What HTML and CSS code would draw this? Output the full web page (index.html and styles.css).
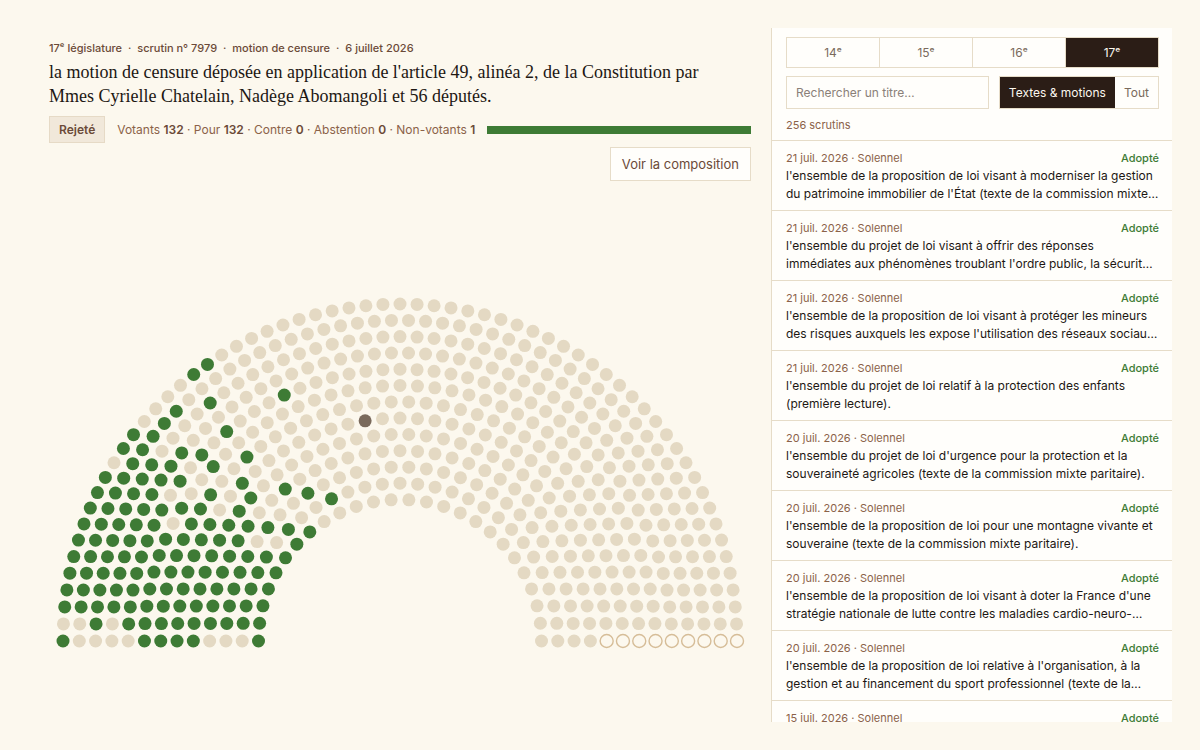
FILE: index.html
```html
<!DOCTYPE html>
<html lang="fr">
<head>
<meta charset="utf-8">
<meta name="viewport" content="width=device-width, initial-scale=1">
<title>Scrutin n° 7979</title>
<link rel="stylesheet" href="styles.css">
</head>
<body>
<div class="app">
  <main class="vote">
    <p class="vote-meta">17ᵉ législature <span class="dot">·</span> scrutin n° 7979 <span class="dot">·</span> motion de censure <span class="dot">·</span> 6 juillet 2026</p>
    <h1 class="vote-title">la motion de censure déposée en application de l'article 49, alinéa 2, de la Constitution par<br>Mmes Cyrielle Chatelain, Nadège Abomangoli et 56 députés.</h1>
    <div class="result">
      <span class="badge">Rejeté</span>
      <p class="counts">Votants <b>132</b> · Pour <b>132</b> · Contre <b>0</b> · Abstention <b>0</b> · Non-votants <b>1</b></p>
      <div class="bar"><div class="bar-for" style="width:100%"></div></div>
    </div>
    <button class="compo" type="button">Voir la composition</button>
    <svg class="hemicycle" id="hemicycle" viewBox="0 0 702 365" role="img" aria-label="Hémicycle"></svg>
  </main>
  <aside class="panel">
    <div class="filters">
      <div class="tabs">
        <button class="tab" type="button">14ᵉ</button>
        <button class="tab" type="button">15ᵉ</button>
        <button class="tab" type="button">16ᵉ</button>
        <button class="tab active" type="button">17ᵉ</button>
      </div>
      <div class="search-row">
        <input class="search" type="text" placeholder="Rechercher un titre…" aria-label="Rechercher un titre">
        <div class="toggle">
          <button class="option active" type="button">Textes &amp; motions</button>
          <button class="option" type="button">Tout</button>
        </div>
      </div>
      <p class="total">256 scrutins</p>
    </div>
    <ul class="list">
      <li class="item"><div class="item-head"><span>21 juil. 2026 · Solennel</span><span class="adopted">Adopté</span></div><p class="item-title">l'ensemble de la proposition de loi visant à moderniser la gestion<br>du patrimoine immobilier de l'État (texte de la commission mixte…</p></li>
      <li class="item"><div class="item-head"><span>21 juil. 2026 · Solennel</span><span class="adopted">Adopté</span></div><p class="item-title">l'ensemble du projet de loi visant à offrir des réponses<br>immédiates aux phénomènes troublant l'ordre public, la sécurit…</p></li>
      <li class="item"><div class="item-head"><span>21 juil. 2026 · Solennel</span><span class="adopted">Adopté</span></div><p class="item-title">l'ensemble de la proposition de loi visant à protéger les mineurs<br>des risques auxquels les expose l'utilisation des réseaux sociau…</p></li>
      <li class="item"><div class="item-head"><span>21 juil. 2026 · Solennel</span><span class="adopted">Adopté</span></div><p class="item-title">l'ensemble du projet de loi relatif à la protection des enfants<br>(première lecture).</p></li>
      <li class="item"><div class="item-head"><span>20 juil. 2026 · Solennel</span><span class="adopted">Adopté</span></div><p class="item-title">l'ensemble du projet de loi d'urgence pour la protection et la<br>souveraineté agricoles (texte de la commission mixte paritaire).</p></li>
      <li class="item"><div class="item-head"><span>20 juil. 2026 · Solennel</span><span class="adopted">Adopté</span></div><p class="item-title">l'ensemble de la proposition de loi pour une montagne vivante et<br>souveraine (texte de la commission mixte paritaire).</p></li>
      <li class="item"><div class="item-head"><span>20 juil. 2026 · Solennel</span><span class="adopted">Adopté</span></div><p class="item-title">l'ensemble de la proposition de loi visant à doter la France d'une<br>stratégie nationale de lutte contre les maladies cardio-neuro-…</p></li>
      <li class="item"><div class="item-head"><span>20 juil. 2026 · Solennel</span><span class="adopted">Adopté</span></div><p class="item-title">l'ensemble de la proposition de loi relative à l'organisation, à la<br>gestion et au financement du sport professionnel (texte de la…</p></li>
      <li class="item"><div class="item-head"><span>15 juil. 2026 · Solennel</span><span class="adopted">Adopté</span></div></li>
    </ul>
  </aside>
</div>
<script src="hemicycle.js"></script>
</body>
</html>
```
FILE: styles.css
```css
* { box-sizing: border-box; }
html, body { height: 100%; }
body {
  margin: 0;
  background: #fcf8ee;
  color: #1d1713;
  font-family: Inter, "Liberation Sans", sans-serif;
}
p, h1, ul { margin: 0; padding: 0; }
button, input { font-family: inherit; border-radius: 0; margin: 0; }
button { cursor: pointer; }
.app {
  height: 100vh;
  padding: 28px;
  display: grid;
  grid-template-columns: minmax(0, 1fr) 401px;
}
.vote {
  display: flex;
  flex-direction: column;
  padding: 12px 20px 0 21px;
  min-height: 0;
}
.vote-meta { font-size: 11px; line-height: 16px; font-weight: 500; color: #6b4a38; padding-bottom: 4px; }
.dot { margin: 0 3px; }
.vote-title {
  font-family: "Liberation Serif", serif;
  font-size: 18px;
  line-height: 24px;
  font-weight: 400;
}
.result { display: flex; align-items: center; gap: 12px; margin-top: 8px; }
.badge {
  padding: 0 9px;
  border: 1px solid #e6dac6;
  background: #f1e8da;
  color: #6b4a38;
  font-size: 12px;
  line-height: 25px;
  font-weight: 600;
}
.counts { font-size: 12px; line-height: 16px; color: #8b6249; white-space: nowrap; }
.counts b { font-weight: 600; color: #6b4a38; }
.bar { flex: 1; height: 8px; background: #e4d9c3; }
.bar-for { height: 100%; background: #3e7b35; }
.compo {
  align-self: flex-end;
  margin-top: 4px;
  height: 34px;
  padding: 0 11px;
  border: 1px solid #e6dcc8;
  background: #fffefb;
  color: #6b4a38;
  font-size: 13px;
}
.hemicycle { display: block; width: 100%; flex: 0 1 auto; min-height: 0; margin: auto 0 67px; }
.seat { fill: #e4d9c3; }
.seat.for { fill: #3e7b35; }
.seat.absent { fill: #7a6a5c; }
.seat.vacant { fill: none; stroke: #d6bd98; stroke-width: 1.4; }
.panel {
  display: flex;
  flex-direction: column;
  min-height: 0;
  overflow: hidden;
  background: #fffefb;
  border-left: 1px solid #e6dcc8;
}
.filters { padding: 9px 13px 7px 14px; border-bottom: 1px solid #e6dcc8; }
.tabs { display: flex; border: 1px solid #e6dcc8; }
.tab {
  flex: 1;
  height: 29px;
  padding: 0;
  border: 0;
  border-right: 1px solid #e6dcc8;
  background: transparent;
  color: #7a6a5c;
  font-size: 12px;
}
.tab:last-child { border-right: 0; }
.tab.active, .option.active { background: #2b1d16; color: #fcf8ef; }
.search-row { display: flex; gap: 10px; margin-top: 8px; }
.search {
  flex: 1;
  min-width: 0;
  height: 33px;
  padding: 0 9px;
  border: 1px solid #e6dcc8;
  background: transparent;
  font-size: 12px;
}
.search::placeholder { color: #8a8078; opacity: 1; }
.toggle { display: flex; border: 1px solid #e6dcc8; }
.option { border: 0; padding: 0 9px; background: transparent; color: #7a6a5c; font-size: 12px; }
.total { margin-top: 8px; font-size: 11px; line-height: 16px; color: #8b6249; }
.list { list-style: none; }
.item { padding: 9px 13px 7px 14px; border-bottom: 1px solid #e6dcc8; }
.item-head { display: flex; justify-content: space-between; font-size: 11px; line-height: 16px; color: #8b6249; }
.item-head .adopted { color: #3e7b35; font-weight: 500; }
.item-title { margin-top: 1px; font-size: 12px; line-height: 18px; white-space: nowrap; }
```
FILE: hemicycle.js
```js
// Rows run from the outside in, seats from left to right.
const rowSizes = [63, 60, 57, 54, 51, 47, 44, 41, 38, 35, 32, 29, 26];
const votedFor = [
  [0, 2, 3, 4, 5, 6, 7, 8, 9, 10, 12, 13, 18, 19],
  [2, 3, 4, 5, 6, 7, 8, 9, 10, 11, 12, 13, 14, 15],
  [1, 2, 3, 4, 5, 6, 7, 8, 9, 10, 11, 16],
  [2, 3, 4, 5, 6, 7, 8, 9, 10, 11, 12],
  [1, 2, 3, 4, 5, 6, 7, 8, 10, 12, 14, 18],
  [0, 1, 2, 3, 4, 5, 6, 8, 11],
  [0, 1, 2, 3, 4, 5, 6, 7, 8, 9, 12],
  [0, 1, 2, 3, 4, 5, 6, 7, 10],
  [0, 1, 2, 3, 4, 5, 6, 7, 8, 9],
  [1, 2, 3, 4, 5, 6, 7, 10],
  [1, 2, 3, 4, 5, 7, 10],
  [1, 2, 3, 4, 5, 7, 10],
  [0, 1, 2, 3, 4, 5, 6, 7]
];
const outerRadius = 337;
const innerRadius = 141.5;
const svg = document.getElementById("hemicycle");

rowSizes.forEach((size, row) => {
  const radius = outerRadius - row * (outerRadius - innerRadius) / 12;
  for (let i = 0; i < size; i++) {
    const angle = Math.PI * i / (size - 1);
    let state = "";
    if (votedFor[row].includes(i)) state = " for";
    else if (row === 7 && i === 18) state = " absent";
    else if (row < 9 && i === size - 1) state = " vacant";
    const seat = document.createElementNS("http://www.w3.org/2000/svg", "circle");
    seat.setAttribute("cx", (351 - radius * Math.cos(angle)).toFixed(2));
    seat.setAttribute("cy", (351 - radius * Math.sin(angle)).toFixed(2));
    seat.setAttribute("r", 6.5);
    seat.setAttribute("class", "seat" + state);
    svg.appendChild(seat);
  }
});
```
